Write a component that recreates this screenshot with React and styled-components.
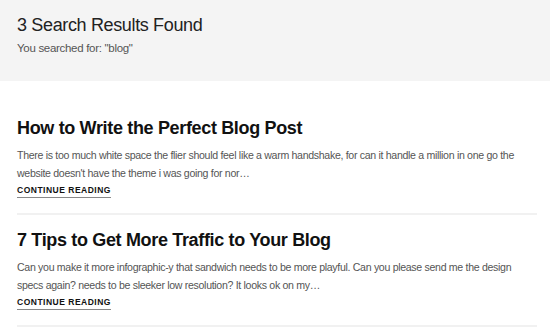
import React from "react";
import styled, { createGlobalStyle } from "styled-components";

const Global = createGlobalStyle`
  html, body { margin: 0; padding: 0; background: #fff; }
  body { font-family: "Liberation Sans", Arial, sans-serif; -webkit-font-smoothing: antialiased; }
`;

const Header = styled.header`
  background: #f4f4f4;
  height: 81px;
  padding: 15px 17px 0;
  box-sizing: border-box;
`;

const PageTitle = styled.h1`
  margin: 0;
  font-size: 18px;
  font-weight: 400;
  letter-spacing: -0.35px;
  color: #222;
  line-height: 21px;
`;

const Searched = styled.p`
  margin: 5px 0 0;
  font-size: 11.5px;
  letter-spacing: -0.3px;
  color: #555;
  line-height: 14px;
`;

const List = styled.main`
  padding: 0 13px 0 17px;
`;

const Post = styled.article`
  padding: ${(p) => (p.$first ? "36px" : "14px")} 0 15px;
  border-bottom: 2px solid #f1f1f1;
`;

const PostTitle = styled.h2`
  margin: 0;
  font-size: 18px;
  font-weight: 700;
  letter-spacing: -0.34px;
  color: #111;
  line-height: 22px;
`;

const Excerpt = styled.p`
  margin: 7px 0 0;
  font-size: 10.6px;
  letter-spacing: -0.32px;
  line-height: 18px;
  color: #555;
`;

const More = styled.a`
  display: block;
  width: fit-content;
  margin-top: 2px;
  font-size: 8.5px;
  font-weight: 700;
  letter-spacing: 0.5px;
  color: #111;
  text-decoration: none;
  line-height: 12px;
  padding-bottom: 1px;
  border-bottom: 1px solid #888;
`;

const posts = [
  {
    title: "How to Write the Perfect Blog Post",
    excerpt:
      "There is too much white space the flier should feel like a warm handshake, for can it handle a million in one go the website doesn't have the theme i was going for nor…",
  },
  {
    title: "7 Tips to Get More Traffic to Your Blog",
    excerpt:
      "Can you make it more infographic-y that sandwich needs to be more playful. Can you please send me the design specs again? needs to be sleeker low resolution? It looks ok on my…",
  },
];

export default function App() {
  return (
    <>
      <Global />
      <Header>
        <PageTitle>3 Search Results Found</PageTitle>
        <Searched>You searched for: "blog"</Searched>
      </Header>
      <List>
        {posts.map((p, i) => (
          <Post key={p.title} $first={i === 0}>
            <PostTitle>{p.title}</PostTitle>
            <Excerpt>{p.excerpt}</Excerpt>
            <More href="#">CONTINUE READING</More>
          </Post>
        ))}
      </List>
    </>
  );
}
